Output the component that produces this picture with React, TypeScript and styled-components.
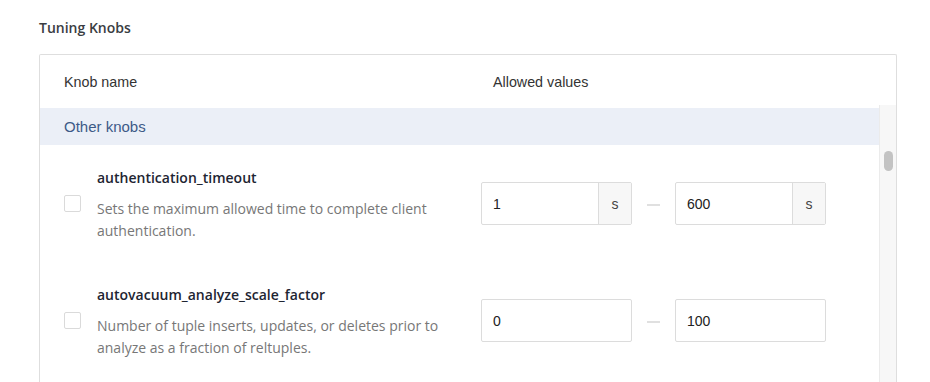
import React from 'react';
import styled, { createGlobalStyle } from 'styled-components';

const GlobalStyle = createGlobalStyle`
  html, body {
    margin: 0;
    padding: 0;
    background: #fff;
    overflow: hidden;
  }
`;

const Page = styled.div`
  padding: 18px 0 0 39px;
  width: 858px;
`;

const Title = styled.h3`
  margin: 0 0 16px;
  font-family: "Open Sans", sans-serif;
  font-size: 14px;
  line-height: 20px;
  font-weight: 600;
  color: #3a3d42;
`;

const Box = styled.div`
  border: 1px solid #dedede;
  border-bottom: none;
  border-radius: 2px 2px 0 0;
  height: 340px;
  display: flex;
  flex-direction: column;
  overflow: hidden;
`;

const HeaderRow = styled.div`
  display: flex;
  height: 53px;
  align-items: center;
  font-family: "Liberation Sans", Arial, sans-serif;
  font-size: 14.3px;
  color: #333;
`;

const HeaderCell = styled.div<{ $width?: number; $pad: number }>`
  width: ${({ $width }) => ($width ? `${$width}px` : 'auto')};
  padding-left: ${({ $pad }) => $pad}px;
  box-sizing: border-box;
`;

const ScrollArea = styled.div`
  display: flex;
  flex: 1;
  margin-top: -3px;
`;

const List = styled.div`
  flex: 1;
  padding-top: 3px;
`;

const Track = styled.div`
  width: 16px;
  background: #f7f7f7;
  border-left: 1px solid #ebebeb;
  display: flex;
  justify-content: center;
`;

const Thumb = styled.div`
  width: 9px;
  height: 20px;
  margin-top: 46px;
  border-radius: 5px;
  background: #c3c3c3;
`;

const GroupRow = styled.div`
  height: 37px;
  display: flex;
  align-items: center;
  padding-left: 24px;
  background: #ebeff7;
  font-family: "Liberation Sans", Arial, sans-serif;
  font-size: 15px;
  color: #3d5a87;
`;

const KnobRow = styled.div`
  display: flex;
  align-items: center;
  height: 117px;
`;

const NameCell = styled.div`
  width: 441px;
  display: flex;
  align-items: center;
  padding-left: 24px;
  box-sizing: border-box;
`;

const Checkbox = styled.span`
  flex: none;
  width: 15px;
  height: 15px;
  border: 1px solid #dadada;
  border-radius: 2px;
  margin-right: 16px;
`;

const Text = styled.div`
  font-family: "Open Sans", sans-serif;
  padding: 3px 20px 0 0;
`;

const Name = styled.div`
  font-size: 14px;
  font-weight: 600;
  line-height: 20px;
  color: #1e2532;
  margin-bottom: 10px;
`;

const Desc = styled.div`
  font-size: 14px;
  line-height: 22px;
  color: #777;
`;

const Values = styled.div`
  display: flex;
  align-items: center;
`;

const Field = styled.div`
  display: flex;
  width: 151px;
  height: 43px;
  box-sizing: border-box;
  border: 1px solid #dcdcdc;
  border-radius: 2px;
  font-family: "Liberation Sans", Arial, sans-serif;
  font-size: 14px;
  color: #222;
`;

const FieldValue = styled.div`
  flex: 1;
  display: flex;
  align-items: center;
  padding-left: 11px;
`;

const Addon = styled.div`
  width: 32px;
  display: flex;
  align-items: center;
  justify-content: center;
  background: #f7f7f7;
  border-left: 1px solid #dcdcdc;
  color: #444;
`;

const Dash = styled.span`
  width: 13px;
  height: 2px;
  margin: 2px 15px 0;
  background: #e0e0e0;
`;

interface IKnob {
  name: string;
  description: string;
  min: string;
  max: string;
  unit?: string;
}

const knobs: IKnob[] = [
  {
    name: 'authentication_timeout',
    description: 'Sets the maximum allowed time to complete client authentication.',
    min: '1',
    max: '600',
    unit: 's',
  },
  {
    name: 'autovacuum_analyze_scale_factor',
    description: 'Number of tuple inserts, updates, or deletes prior to analyze as a fraction of reltuples.',
    min: '0',
    max: '100',
  },
];

const ValueField: React.FC<{ value: string; unit?: string }> = ({ value, unit }) => (
  <Field>
    <FieldValue>{value}</FieldValue>
    {unit && <Addon>{unit}</Addon>}
  </Field>
);

export default function App() {
  return (
    <Page>
      <GlobalStyle />
      <Title>Tuning Knobs</Title>
      <Box>
        <HeaderRow>
          <HeaderCell $width={441} $pad={24}>Knob name</HeaderCell>
          <HeaderCell $pad={12}>Allowed values</HeaderCell>
        </HeaderRow>
        <ScrollArea>
          <List>
            <GroupRow>Other knobs</GroupRow>
            {knobs.map((k) => (
              <KnobRow key={k.name}>
                <NameCell>
                  <Checkbox />
                  <Text>
                    <Name>{k.name}</Name>
                    <Desc>{k.description}</Desc>
                  </Text>
                </NameCell>
                <Values>
                  <ValueField value={k.min} unit={k.unit} />
                  <Dash />
                  <ValueField value={k.max} unit={k.unit} />
                </Values>
              </KnobRow>
            ))}
          </List>
          <Track>
            <Thumb />
          </Track>
        </ScrollArea>
      </Box>
    </Page>
  );
}
